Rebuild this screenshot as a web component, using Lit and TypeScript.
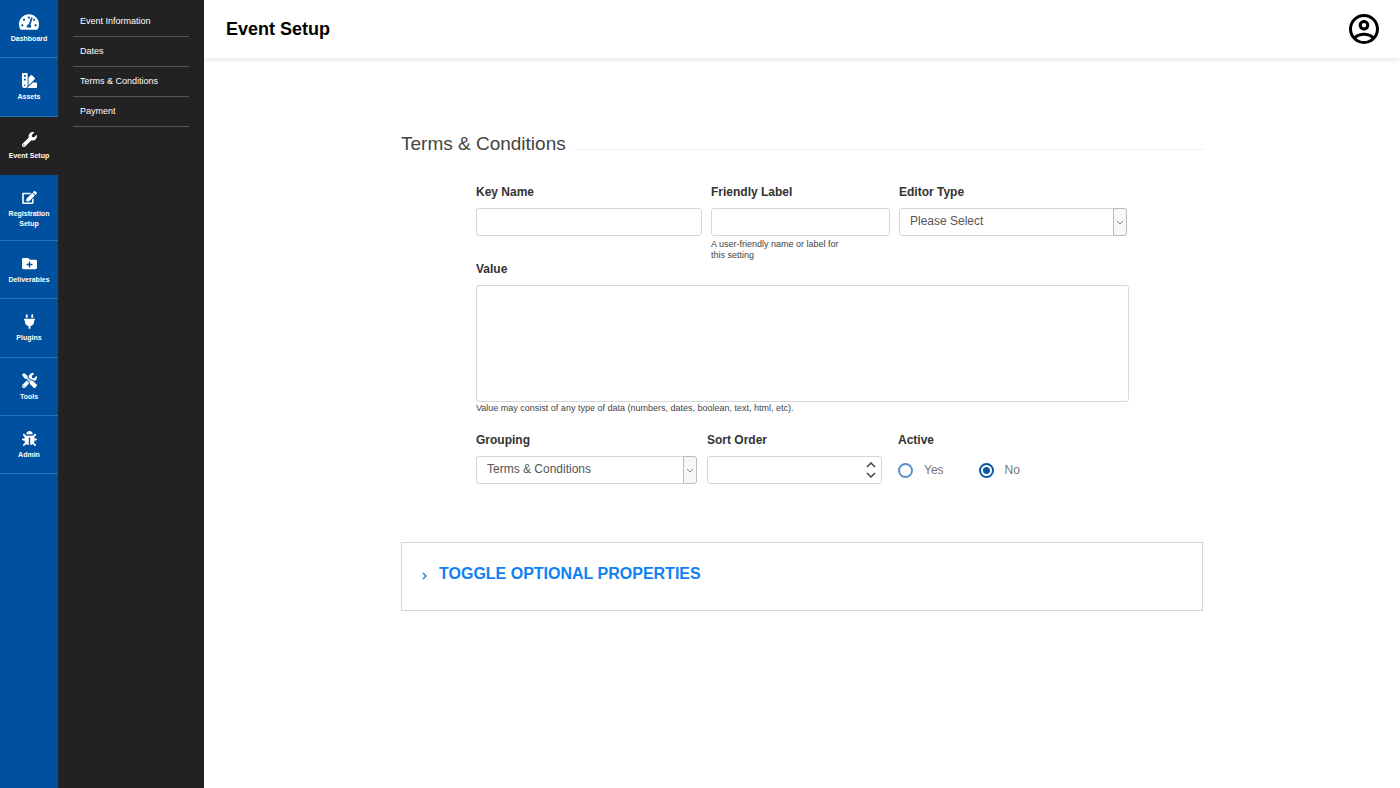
import { LitElement, html, css, svg } from "lit";
import { customElement, state } from "lit/decorators.js";
import { classMap } from "lit/directives/class-map.js";

interface NavItem {
  label: string;
  viewBox: string;
  width: number;
  height: number;
  path: string;
}

const NAV: NavItem[] = [
  {
    label: "Dashboard",
    viewBox: "0 0 576 512",
    width: 20,
    height: 18,
    path: "M288 32C128.94 32 0 160.94 0 320c0 52.8 14.25 102.26 39.06 144.8 5.61 9.62 16.3 15.2 27.44 15.2h443c11.14 0 21.83-5.58 27.44-15.2C561.75 422.26 576 372.8 576 320c0-159.06-128.94-288-288-288zm0 64c14.71 0 26.58 10.13 30.32 23.65-1.11 2.26-2.64 4.23-3.45 6.67l-9.22 27.67c-5.13 3.49-10.97 6.01-17.64 6.01-17.67 0-32-14.33-32-32S270.33 96 288 96zM96 384c-17.67 0-32-14.33-32-32s14.33-32 32-32 32 14.33 32 32-14.33 32-32 32zm48-160c-17.67 0-32-14.33-32-32s14.33-32 32-32 32 14.33 32 32-14.33 32-32 32zm246.77-72.41l-61.33 184C343.13 347.33 352 364.54 352 384c0 11.72-3.38 22.55-8.88 32H232.88c-5.5-9.45-8.88-20.28-8.88-32 0-33.94 26.5-61.43 59.9-63.59l61.34-184.01c4.17-12.56 17.73-19.45 30.36-15.17 12.57 4.19 19.35 17.79 15.17 30.36zm14.66 57.2l15.52-46.55c3.47-1.29 7.13-2.23 11.05-2.23 17.67 0 32 14.33 32 32s-14.33 32-32 32c-11.38-.01-20.89-6.28-26.57-15.22zM480 384c-17.67 0-32-14.33-32-32s14.33-32 32-32 32 14.33 32 32-14.33 32-32 32z",
  },
  {
    label: "Assets",
    viewBox: "0 0 512 512",
    width: 15,
    height: 15,
    path: "M434.66,167.71h0L344.5,77.36a31.83,31.83,0,0,0-45-.07h0l-.07.07L224,152.88V424L434.66,212.9A32,32,0,0,0,434.66,167.71ZM480,320H373.09L186.68,506.51c-2.06,2.07-4.5,3.58-6.68,5.49H480a32,32,0,0,0,32-32V352A32,32,0,0,0,480,320ZM192,32A32,32,0,0,0,160,0H32A32,32,0,0,0,0,32V416a96,96,0,0,0,192,0ZM96,440a24,24,0,1,1,24-24A24,24,0,0,1,96,440Zm32-184H64V192h64Zm0-128H64V64h64Z",
  },
  {
    label: "Event Setup",
    viewBox: "0 0 512 512",
    width: 15,
    height: 15,
    path: "M507.73 109.1c-2.24-9.03-13.54-12.09-20.12-5.51l-74.36 74.36-67.88-11.31-11.31-67.88 74.36-74.36c6.62-6.62 3.43-17.9-5.66-20.16-47.38-11.74-99.55.91-136.58 37.93-39.64 39.64-50.55 97.1-34.05 147.2L18.74 402.76c-24.99 24.99-24.99 65.51 0 90.5 24.99 24.99 65.51 24.99 90.5 0l213.21-213.21c50.12 16.71 107.47 5.68 147.37-34.22 37.07-37.07 49.7-89.32 37.91-136.73zM64 472c-13.25 0-24-10.75-24-24 0-13.26 10.75-24 24-24s24 10.74 24 24c0 13.25-10.75 24-24 24z",
  },
  {
    label: "Registration Setup",
    viewBox: "0 0 576 512",
    width: 15,
    height: 13,
    path: "M402.6 83.2l90.2 90.2c3.8 3.8 3.8 10 0 13.8L274.4 405.6l-92.8 10.3c-12.4 1.4-22.9-9.1-21.5-21.5l10.3-92.8L388.8 83.2c3.8-3.8 10-3.8 13.8 0zm162-22.9l-48.8-48.8c-15.2-15.2-39.9-15.2-55.2 0l-35.4 35.4c-3.8 3.8-3.8 10 0 13.8l90.2 90.2c3.8 3.8 10 3.8 13.8 0l35.4-35.4c15.2-15.3 15.2-40 0-55.2zM384 346.2V448H64V128h229.8c3.2 0 6.2-1.3 8.5-3.5l40-40c7.6-7.6 2.2-20.5-8.5-20.5H48C21.5 64 0 85.5 0 112v352c0 26.5 21.5 48 48 48h352c26.5 0 48-21.5 48-48V306.2c0-10.7-12.9-16-20.5-8.5l-40 40c-2.2 2.3-3.5 5.3-3.5 8.5z",
  },
  {
    label: "Deliverables",
    viewBox: "0 0 512 512",
    width: 15,
    height: 15,
    path: "M464,128H272L208,64H48A48,48,0,0,0,0,112V400a48,48,0,0,0,48,48H464a48,48,0,0,0,48-48V176A48,48,0,0,0,464,128ZM359.5,296a16,16,0,0,1-16,16h-64v64a16,16,0,0,1-16,16h-16a16,16,0,0,1-16-16V312h-64a16,16,0,0,1-16-16V280a16,16,0,0,1,16-16h64V200a16,16,0,0,1,16-16h16a16,16,0,0,1,16,16v64h64a16,16,0,0,1,16,16Z",
  },
  {
    label: "Plugins",
    viewBox: "0 0 384 512",
    width: 11,
    height: 15,
    path: "M320,32a32,32,0,0,0-64,0v96h64Zm48,128H16A16,16,0,0,0,0,176v32a16,16,0,0,0,16,16H32v32A160.07,160.07,0,0,0,160,412.8V512h64V412.8A160.07,160.07,0,0,0,352,256V224h16a16,16,0,0,0,16-16V176A16,16,0,0,0,368,160ZM128,32a32,32,0,0,0-64,0v96h64Z",
  },
  {
    label: "Tools",
    viewBox: "0 0 512 512",
    width: 15,
    height: 15,
    path: "M501.1 395.7L384 278.6c-23.1-23.1-57.6-27.6-85.4-13.9L192 158.1V96L64 0 0 64l96 128h62.1l106.6 106.6c-13.6 27.8-9.2 62.3 13.9 85.4l117.1 117.1c14.6 14.6 38.2 14.6 52.7 0l52.7-52.7c14.5-14.6 14.5-38.2 0-52.7zM331.7 225c28.3 0 54.9 11 74.9 31l19.4 19.4c15.8-6.9 30.8-16.5 43.8-29.5 37.1-37.1 49.7-89.3 37.9-136.7-2.2-9-13.5-12.1-20.1-5.5l-74.4 74.4-67.9-11.3L334 98.9l74.4-74.4c6.6-6.6 3.4-17.9-5.7-20.2-47.4-11.7-99.6.9-136.6 37.9-28.5 28.5-41.9 66.1-41.2 103.6l82.1 82.1c8.1-1.9 16.5-2.9 24.7-2.9zm-103.9 82l-56.7-56.7L18.7 402.8c-25 25-25 65.5 0 90.5s65.5 25 90.5 0l123.6-123.6c-7.6-19.9-9.9-41.6-5-62.7zM64 472c-13.2 0-24-10.8-24-24 0-13.3 10.7-24 24-24s24 10.7 24 24c0 13.2-10.7 24-24 24z",
  },
  {
    label: "Admin",
    viewBox: "0 0 512 512",
    width: 15,
    height: 15,
    path: "M511.988 288.9c-.478 17.43-15.217 31.1-32.653 31.1H424v16c0 21.864-4.882 42.584-13.6 61.145l60.228 60.228c12.496 12.497 12.496 32.758 0 45.255-12.498 12.497-32.759 12.496-45.256 0l-54.736-54.736C345.886 467.965 314.351 480 280 480V236c0-6.627-5.373-12-12-12h-24c-6.627 0-12 5.373-12 12v244c-34.351 0-65.886-12.035-90.636-32.108l-54.736 54.736c-12.498 12.497-32.759 12.496-45.256 0-12.496-12.497-12.496-32.758 0-45.255l60.228-60.228C92.882 378.584 88 357.864 88 336v-16H32.666C15.23 320 .491 306.33.013 288.9-.484 270.816 14.028 256 32 256h56v-58.745l-46.628-46.628c-12.496-12.497-12.496-32.758 0-45.255 12.498-12.497 32.758-12.497 45.256 0L141.255 160h229.489l54.627-54.627c12.498-12.497 32.758-12.497 45.256 0 12.496 12.497 12.496 32.758 0 45.255L424 197.255V256h56c17.972 0 32.484 14.816 31.988 32.9zM257 0c-61.856 0-112 50.144-112 112h224C369 50.144 318.856 0 257 0z",
  },
];

const SUBMENU = ["Event Information", "Dates", "Terms & Conditions", "Payment"];

const chevron = (points: string, width: number, height: number, stroke: number) => svg`
  <svg class="chevron" aria-hidden="true" width=${width} height=${height} viewBox="0 0 ${width} ${height}">
    <polyline points=${points} fill="none" stroke="currentColor" stroke-width=${stroke}></polyline>
  </svg>`;

@customElement("side-nav")
class SideNav extends LitElement {
  static styles = css`
    :host {
      display: flex;
      color: #fff;
    }
    ul {
      list-style: none;
      margin: 0;
      padding: 0;
    }
    a {
      color: inherit;
      text-decoration: none;
    }
    .rail {
      width: 58px;
      background: #0050a0;
    }
    .item {
      display: flex;
      flex-direction: column;
      align-items: center;
      gap: 2px;
      box-sizing: border-box;
      min-height: 58px;
      padding: 12px 4px 11px;
      border-bottom: 1px solid #2a70b5;
      font-size: 7px;
      font-weight: 700;
      line-height: 10px;
      text-align: center;
    }
    .rail li:nth-child(4n + 2) .item {
      min-height: 59px;
    }
    .item.active {
      background: #222;
      border-bottom-color: #222;
    }
    .icon {
      display: flex;
      align-items: center;
      justify-content: center;
      height: 20px;
    }
    .menu {
      width: 116px;
      padding: 7px 15px;
      background: #222;
    }
    .entry {
      display: block;
      padding: 0 7px;
      border-bottom: 1px solid #555;
      font-size: 9px;
      line-height: 29px;
    }
  `;

  render() {
    return html`
      <nav class="rail" aria-label="Main">
        <ul>
          ${NAV.map((item) => {
            const active = item.label === "Event Setup";
            return html`<li>
              <a class=${classMap({ item: true, active })} href="#">
                <span class="icon">
                  <svg aria-hidden="true" width=${item.width} height=${item.height} viewBox=${item.viewBox}>
                    <path fill="currentColor" d=${item.path}></path>
                  </svg>
                </span>
                <span>${item.label}</span>
              </a>
            </li>`;
          })}
        </ul>
      </nav>
      <nav class="menu" aria-label="Event setup">
        <ul>
          ${SUBMENU.map((text) => html`<li><a class="entry" href="#">${text}</a></li>`)}
        </ul>
      </nav>
    `;
  }
}

@customElement("settings-form")
class SettingsForm extends LitElement {
  static styles = css`
    :host {
      display: block;
      color: #333;
    }
    form {
      max-width: 802px;
      margin: 0 auto;
    }
    h2 {
      display: flex;
      align-items: center;
      gap: 8px;
      margin: 0;
      font-size: 19px;
      font-weight: 400;
      line-height: 24px;
      color: #444;
    }
    .rule {
      flex: 1;
      height: 1px;
      margin-top: 10px;
      background: #eee;
    }
    .fields {
      padding: 28px 74px 58px 75px;
    }
    .row {
      display: grid;
      align-items: start;
    }
    .first {
      grid-template-columns: 226fr 179fr 228fr;
      gap: 9px;
      padding-right: 2px;
    }
    .last {
      grid-template-columns: 221fr 175fr 237fr;
      gap: 10px;
      margin-top: 18px;
    }
    .field {
      display: flex;
      flex-direction: column;
      min-width: 0;
    }
    .label {
      margin: 0;
      padding: 0;
      font-size: 12px;
      font-weight: 700;
      line-height: 16px;
    }
    .control {
      display: block;
      box-sizing: border-box;
      width: 100%;
      height: 28px;
      margin: 0;
      padding: 0 10px;
      border: 1px solid #d5d8d8;
      border-radius: 3px;
      background: #fff;
      color: #555;
      font: inherit;
      font-size: 12px;
      outline: none;
      appearance: none;
    }
    .field > .control,
    .box {
      margin-top: 8px;
    }
    input[type="number"] {
      appearance: textfield;
    }
    input::-webkit-inner-spin-button {
      appearance: none;
    }
    select.control {
      padding-bottom: 2px;
    }
    textarea.control {
      height: 117px;
      padding: 8px 10px;
      resize: none;
    }
    .box {
      position: relative;
    }
    .arrow {
      position: absolute;
      inset: 0 0 0 auto;
      display: flex;
      align-items: center;
      justify-content: center;
      box-sizing: border-box;
      width: 14px;
      border: 1px solid #bbb;
      border-radius: 0 3px 3px 0;
      background: #f6f8f8;
      color: #888;
      pointer-events: none;
    }
    .spinner {
      position: absolute;
      inset: 0 6px 0 auto;
      display: flex;
      flex-direction: column;
      justify-content: center;
      gap: 4px;
    }
    .spinner button {
      display: flex;
      padding: 0;
      border: 0;
      background: none;
      color: #444;
    }
    .hint {
      margin: 1px 0 0;
      font-size: 9px;
      line-height: 11px;
      color: #444;
    }
    .short {
      max-width: 140px;
      margin-top: 3px;
    }
    .active {
      border: 0;
      margin: 0;
      padding: 0 0 0 6px;
    }
    .options {
      display: flex;
      gap: 35px;
      margin-top: 14px;
    }
    .option {
      display: flex;
      align-items: center;
      gap: 11px;
      font-size: 12px;
      line-height: 16px;
      color: #777;
    }
    .option input {
      appearance: none;
      box-sizing: border-box;
      width: 15px;
      height: 15px;
      margin: 0;
      border: 2px solid #5a90c8;
      border-radius: 50%;
      background: #fff;
    }
    .option input:checked {
      border-color: #0a58a6;
      background: radial-gradient(circle, #0a58a6 0 3px, #fff 4px);
    }
    .panel {
      padding: 21px 20px 26px;
      border: 1px solid #d5d5d5;
    }
    .toggle {
      display: flex;
      align-items: center;
      gap: 12px;
      padding: 0;
      border: 0;
      background: none;
      color: #0f80f5;
      font: inherit;
      font-size: 16px;
      font-weight: 700;
      line-height: 20px;
      text-transform: uppercase;
    }
    .toggle svg {
      margin-top: 3px;
    }
  `;

  @state() private active = "no";

  private step(delta: number) {
    const input = this.renderRoot.querySelector<HTMLInputElement>("#sort");
    if (input) input.value = String(Number(input.value || 0) + delta);
  }

  private option(value: string, text: string) {
    return html`<label class="option">
      <input
        type="radio"
        name="active"
        value=${value}
        .checked=${this.active === value}
        @change=${() => (this.active = value)}
      />${text}
    </label>`;
  }

  render() {
    const down = chevron("1,1 4,4 7,1", 8, 5, 1);
    return html`
      <form @submit=${(e: Event) => e.preventDefault()}>
        <h2>Terms &amp; Conditions<span class="rule"></span></h2>
        <div class="fields">
          <div class="row first">
            <div class="field">
              <label class="label" for="key">Key Name</label>
              <input class="control" id="key" type="text" />
            </div>
            <div class="field">
              <label class="label" for="friendly">Friendly Label</label>
              <input class="control" id="friendly" type="text" aria-describedby="friendly-hint" />
              <p class="hint short" id="friendly-hint">A user-friendly name or label for this setting</p>
            </div>
            <div class="field">
              <label class="label" for="editor">Editor Type</label>
              <div class="box">
                <select class="control" id="editor">
                  <option>Please Select</option>
                </select>
                <span class="arrow">${down}</span>
              </div>
            </div>
          </div>
          <div class="field">
            <label class="label" for="value">Value</label>
            <textarea class="control" id="value" aria-describedby="value-hint"></textarea>
            <p class="hint" id="value-hint">
              Value may consist of any type of data (numbers, dates, boolean, text, html, etc).
            </p>
          </div>
          <div class="row last">
            <div class="field">
              <label class="label" for="grouping">Grouping</label>
              <div class="box">
                <select class="control" id="grouping">
                  <option>Terms &amp; Conditions</option>
                </select>
                <span class="arrow">${down}</span>
              </div>
            </div>
            <div class="field">
              <label class="label" for="sort">Sort Order</label>
              <div class="box">
                <input class="control" id="sort" type="number" />
                <span class="spinner">
                  <button type="button" aria-label="Increase" @click=${() => this.step(1)}>
                    ${chevron("1,5 5,1 9,5", 10, 6, 1.5)}
                  </button>
                  <button type="button" aria-label="Decrease" @click=${() => this.step(-1)}>
                    ${chevron("1,1 5,5 9,1", 10, 6, 1.5)}
                  </button>
                </span>
              </div>
            </div>
            <fieldset class="active">
              <legend class="label">Active</legend>
              <div class="options">${this.option("yes", "Yes")}${this.option("no", "No")}</div>
            </fieldset>
          </div>
        </div>
        <div class="panel">
          <button class="toggle" type="button" aria-expanded="false">
            ${chevron("1,1 4,4 1,7", 5, 8, 1.5)}Toggle Optional Properties
          </button>
        </div>
      </form>
    `;
  }
}

@customElement("app-root")
class AppRoot extends LitElement {
  static styles = css`
    :host {
      display: flex;
      min-height: 100vh;
      background: #fff;
      font-family: "Liberation Sans", Arial, sans-serif;
    }
    .page {
      flex: 1;
      min-width: 0;
    }
    header {
      display: flex;
      align-items: center;
      justify-content: space-between;
      height: 58px;
      padding: 0 21px 0 22px;
      box-shadow: 0 3px 4px rgba(0, 0, 0, 0.08);
    }
    h1 {
      margin: 0;
      font-size: 18px;
      line-height: 24px;
      color: #000;
    }
    .account {
      display: flex;
      padding: 0;
      border: 0;
      background: none;
      color: #000;
    }
    main {
      padding: 74px 24px;
    }
  `;

  render() {
    return html`
      <side-nav></side-nav>
      <div class="page">
        <header>
          <h1>Event Setup</h1>
          <button class="account" type="button" aria-label="Account">
            <svg aria-hidden="true" width="30" height="30" viewBox="2 2 20 20">
              <path
                fill="currentColor"
                d="M12,2A10,10 0 0,0 2,12A10,10 0 0,0 12,22A10,10 0 0,0 22,12A10,10 0 0,0 12,2M7.07,18.28C7.5,17.38 10.12,16.5 12,16.5C13.88,16.5 16.5,17.38 16.93,18.28C15.57,19.36 13.86,20 12,20C10.14,20 8.43,19.36 7.07,18.28M18.36,16.83C16.93,15.09 13.46,14.5 12,14.5C10.54,14.5 7.07,15.09 5.64,16.83C4.62,15.5 4,13.82 4,12C4,7.59 7.59,4 12,4C16.41,4 20,7.59 20,12C20,13.82 19.38,15.5 18.36,16.83M12,6C10.06,6 8.5,7.56 8.5,9.5C8.5,11.44 10.06,13 12,13C13.94,13 15.5,11.44 15.5,9.5C15.5,7.56 13.94,6 12,6M12,11A1.5,1.5 0 0,1 10.5,9.5A1.5,1.5 0 0,1 12,8A1.5,1.5 0 0,1 13.5,9.5A1.5,1.5 0 0,1 12,11Z"
              ></path>
            </svg>
          </button>
        </header>
        <main><settings-form></settings-form></main>
      </div>
    `;
  }
}
